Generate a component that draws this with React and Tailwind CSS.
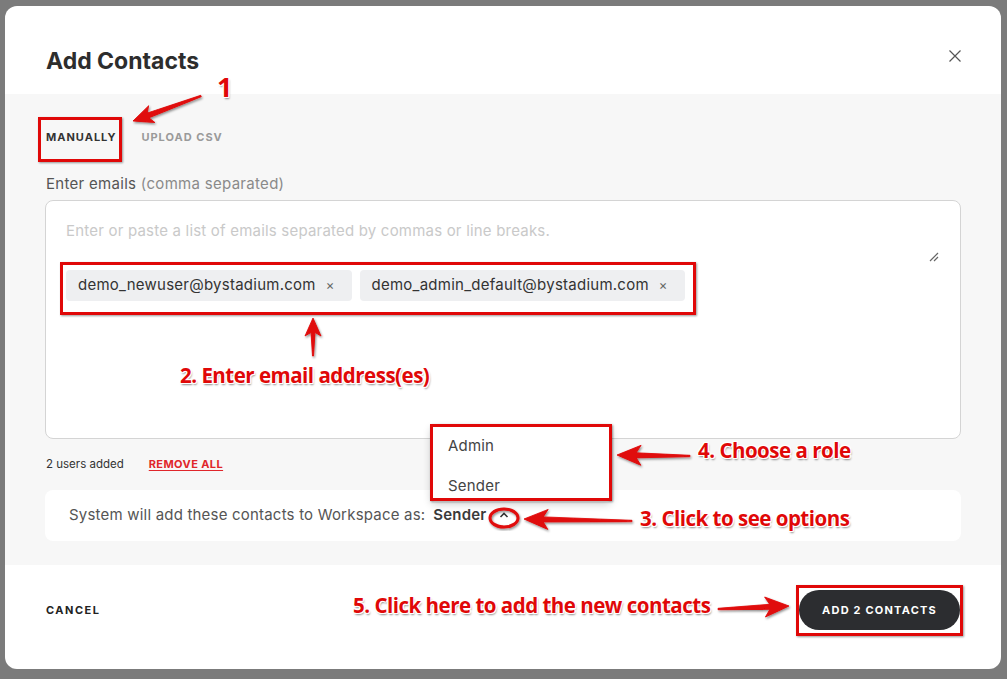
import React from "react";

function arrowPts(x1, y1, x2, y2, headLen, headW, bodyW, tailW) {
  const dx = x2 - x1, dy = y2 - y1;
  const L = Math.hypot(dx, dy);
  const ux = dx / L, uy = dy / L;
  const nx = -uy, ny = ux;
  const bx = x2 - ux * headLen, by = y2 - uy * headLen;
  const nb = x2 - ux * headLen * 0.8, nby = y2 - uy * headLen * 0.8;
  const p = [
    [x1 + nx * tailW / 2, y1 + ny * tailW / 2],
    [nb + nx * bodyW / 2, nby + ny * bodyW / 2],
    [bx + nx * headW, by + ny * headW],
    [x2, y2],
    [bx - nx * headW, by - ny * headW],
    [nb - nx * bodyW / 2, nby - ny * bodyW / 2],
    [x1 - nx * tailW / 2, y1 - ny * tailW / 2],
  ];
  return p.map((q) => q[0].toFixed(1) + "," + q[1].toFixed(1)).join(" ");
}

const arrows = [
  arrowPts(201, 96, 133, 121, 20, 9, 5, 1.5),
  arrowPts(313, 356, 313, 318, 18, 8, 4, 1),
  arrowPts(632, 521, 524, 519, 24, 10, 5, 1.5),
  arrowPts(690, 456, 617, 455, 24, 10, 5, 1.5),
  arrowPts(718, 609, 789, 606, 24, 10, 5, 1.5),
];

const ann =
  "absolute font-['Open_Sans'] font-bold text-[#e00808] tracking-[-0.5px] whitespace-nowrap leading-none [text-shadow:1px_0_0_#fff,-1px_0_0_#fff,0_1px_0_#fff,0_-1px_0_#fff,1px_1px_0_#fff,-1px_-1px_0_#fff,1px_-1px_0_#fff,-1px_1px_0_#fff,1px_2px_2px_rgba(0,0,0,0.45)]";

function Chip({ text }) {
  return (
    <div className="flex items-center h-[31px] rounded-[4px] bg-[#eeeff1] pl-[12px] pr-[17px] text-[15px] tracking-[0.25px] text-[#333]">
      <span>{text}</span>
      <span className="ml-[10px] text-[13px] text-[#666]">×</span>
    </div>
  );
}

export default function App() {
  return (
    <div className="relative w-[1007px] h-[679px] bg-[#7b7b7b] pt-[6px] pl-[5px] font-['Inter',sans-serif] overflow-hidden">
      <div className="relative w-[996px] h-[663px] rounded-[12px] bg-white flex flex-col overflow-hidden">
        {/* header */}
        <div className="h-[88px] shrink-0 flex justify-between items-start pt-[39px] pl-[41px] pr-[40px]">
          <h1 className="text-[23px] leading-[32px] font-bold text-[#2d2d2d]">Add Contacts</h1>
          <svg width="12" height="12" viewBox="0 0 12 12" className="mt-[5px]">
            <path d="M0.5 0.5L11.5 11.5M11.5 0.5L0.5 11.5" stroke="#555" strokeWidth="1.2" />
          </svg>
        </div>

        {/* body */}
        <div className="relative flex-1 bg-[#f7f7f7] pt-[35px] pl-[40px] pr-[40px] pb-[24px] flex flex-col">
          <div className="flex gap-[25px] pl-[1px] h-[16px] items-center text-[11px] font-bold tracking-[1px] leading-[16px]">
            <span className="text-[#333]">MANUALLY</span>
            <span className="text-[#9a9a9a]">UPLOAD CSV</span>
          </div>
          <div className="mt-[29px] pl-[1px] h-[20px] text-[15px] tracking-[0.3px] leading-[20px] text-[#555]">
            Enter emails <span className="text-[#8a8a8a]">(comma separated)</span>
          </div>
          <div className="relative mt-[6px] h-[239px] rounded-[8px] border border-[#d4d4d4] bg-white pt-[20px] pl-[20px]">
            <div className="text-[15px] tracking-[0.2px] leading-[20px] text-[#c9c9c9]">
              Enter or paste a list of emails separated by commas or line breaks.
            </div>
            <div className="mt-[29px] flex gap-[8px]">
              <Chip text="demo_newuser@bystadium.com" />
              <Chip text="demo_admin_default@bystadium.com" />
            </div>
            <svg width="12" height="12" viewBox="0 0 12 12" className="absolute right-[20px] top-[50px]">
              <path d="M2 10L10 2M6 10L10 6" stroke="#666" strokeWidth="1.2" />
            </svg>
          </div>
          <div className="mt-[17px] pl-[1px] h-[16px] flex items-center text-[11.5px] leading-[16px]">
            <span className="text-[#333]">2 users added</span>
            <span className="ml-[25px] text-[11px] font-bold tracking-[0.4px] text-[#e0262b] underline underline-offset-2">
              REMOVE ALL
            </span>
          </div>
          <div className="mt-[18px] h-[51px] rounded-[8px] bg-white flex items-center pl-[24px] text-[15px] tracking-[0.2px] text-[#555]">
            <span>System will add these contacts to Workspace as:</span>
            <span className="ml-[8px] font-semibold text-[#3a3a3a]">Sender</span>
            <svg width="10" height="8" viewBox="0 0 10 8" className="ml-[12px] mb-[2px]">
              <path d="M1.5 6L5 2.5L8.5 6" stroke="#333" strokeWidth="1.6" fill="none" />
            </svg>
          </div>

          {/* dropdown */}
          <div className="absolute left-[426px] top-[332px] w-[180px] h-[76px] bg-white rounded-[4px] shadow-[0_2px_8px_rgba(0,0,0,0.2)] flex flex-col pl-[17px] text-[15px] tracking-[0.2px] text-[#444]">
            <div className="h-[40px] flex items-center">Admin</div>
            <div className="h-[36px] flex items-center pt-[4px]">Sender</div>
          </div>
        </div>

        {/* footer */}
        <div className="h-[104px] shrink-0 flex justify-between items-start pt-[25px] pl-[41px] pr-[41px]">
          <div className="h-[40px] flex items-center text-[11px] font-bold tracking-[1.5px] text-[#222]">CANCEL</div>
          <div className="h-[40px] w-[161px] rounded-full bg-[#2c2d30] flex items-center justify-center text-[11px] font-bold tracking-[1.2px] text-white">
            ADD 2 CONTACTS
          </div>
        </div>
      </div>

      {/* annotations */}
      <div className="absolute left-[38px] top-[117px] w-[84px] h-[45px] border-[3px] border-[#e00808] shadow-[1px_1px_2px_rgba(0,0,0,0.4)]" />
      <div className="absolute left-[60px] top-[262px] w-[636px] h-[53px] border-[3px] border-[#e00808] shadow-[1px_1px_2px_rgba(0,0,0,0.4)]" />
      <div className="absolute left-[430px] top-[424px] w-[182px] h-[77px] border-[3px] border-[#e00808] shadow-[1px_1px_2px_rgba(0,0,0,0.4)]" />
      <div className="absolute left-[796px] top-[585px] w-[167px] h-[51px] border-[3px] border-[#e00808] shadow-[1px_1px_2px_rgba(0,0,0,0.4)]" />

      <svg className="absolute left-0 top-0" width="1007" height="679" viewBox="0 0 1007 679">
        <defs>
          <filter id="sh" x="-20%" y="-20%" width="140%" height="140%">
            <feDropShadow dx="1" dy="1.5" stdDeviation="1" floodColor="#000" floodOpacity="0.45" />
          </filter>
        </defs>
        <g filter="url(#sh)" fill="#e00808" stroke="#e00808" strokeWidth="0.8" strokeLinejoin="round">
          {arrows.map((p, i) => (
            <polygon key={i} points={p} />
          ))}
        </g>
        <ellipse cx="504" cy="518" rx="14" ry="9" fill="none" stroke="#e00808" strokeWidth="3" filter="url(#sh)" />
      </svg>

      <div className={ann + " left-[217px] top-[73px] text-[27px]"}>1</div>
      <div className={ann + " left-[180px] top-[365px] text-[20.5px]"}>2. Enter email address(es)</div>
      <div className={ann + " left-[640px] top-[508px] text-[20.5px]"}>3. Click to see options</div>
      <div className={ann + " left-[698px] top-[440px] text-[20.5px]"}>4. Choose a role</div>
      <div className={ann + " left-[353px] top-[595px] text-[20.5px]"}>5. Click here to add the new contacts</div>
    </div>
  );
}
